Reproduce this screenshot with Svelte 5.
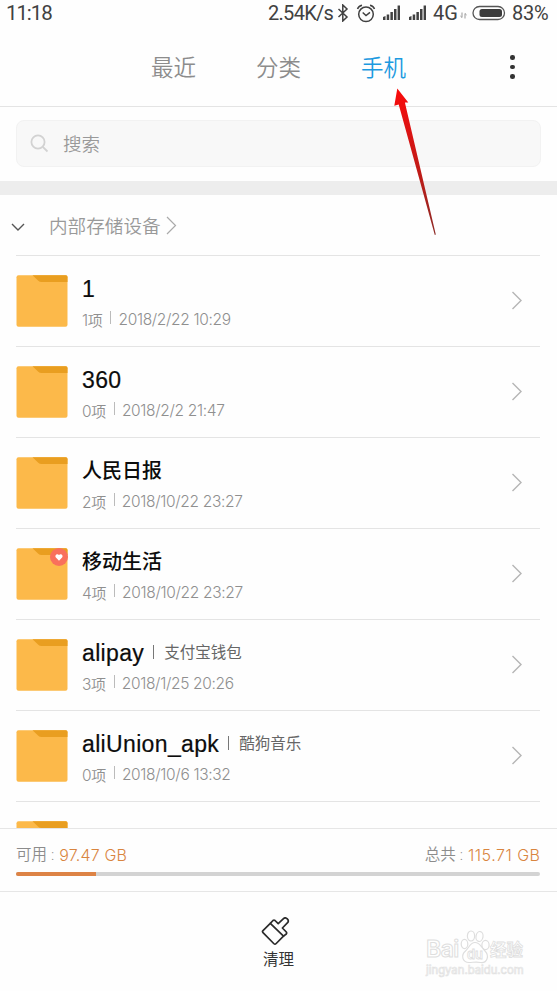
<script>
  const tabs = [
    { label: '最近', active: false },
    { label: '分类', active: false },
    { label: '手机', active: true }
  ];
  const folders = [
    { name: '1', count: '1', date: '2018/2/22 10:29' },
    { name: '360', count: '0', date: '2018/2/2 21:47' },
    { name: '人民日报', cjk: true, count: '2', date: '2018/10/22 23:27' },
    { name: '移动生活', cjk: true, count: '4', date: '2018/10/22 23:27', liked: true },
    { name: 'alipay', note: '支付宝钱包', count: '3', date: '2018/1/25 20:26' },
    { name: 'aliUnion_apk', note: '酷狗音乐', count: '0', date: '2018/10/6 13:32' }
  ];
  const available = 97.47;
  const total = 115.71;
  const used = ((total - available) / total) * 96.5;
</script>

{#snippet folderIcon()}
  <svg class="folder" width="52" height="52" viewBox="0 0 52 52">
    <rect x=".5" y=".3" width="51" height="51.4" rx="2" fill="#fcb94a" />
    <path d="M16.5.3H50a1.5 1.5 0 0 1 1.5 1.5V7H25.5q-2 0-3.2-1.3Z" fill="#e99e20" />
  </svg>
{/snippet}

{#snippet signal()}
  <svg width="18" height="16" viewBox="0 0 18 16" fill="#414141">
    <path d="M0 15v-3l2.500-1v4zM3.700 15V9.500h2.500V15zM7.400 15V7h2.500v8zM11 15V4h2.500v11zM14.600 15V0.500h2.400V15z" />
  </svg>
{/snippet}

<div class="screen">
  <div class="status">
    <span class="time">11:18</span>
    <span class="speed">2.54K/s</span>
    <svg class="bt" width="12" height="18" viewBox="0 0 12 18" fill="none" stroke="#414141" stroke-width="1.500">
      <path d="M1.500 5l8.500 8-4.200 4V1L10 5l-8.500 8" />
    </svg>
    <svg class="alarm" width="20" height="19" viewBox="0 0 20 19" fill="none" stroke="#414141" stroke-width="1.500">
      <circle cx="10" cy="10.300" r="7.300" />
      <path d="M1.500 5Q2.500 2 6 1.200M18.500 5Q17.500 2 14 1.200M6.700 8.500l3.300 3 4-3.200" />
    </svg>
    <span class="sig one">{@render signal()}</span>
    <span class="sig">{@render signal()}</span>
    <span class="net">4G</span>
    <svg class="updown" width="7" height="7" viewBox="0 0 7 7" fill="none" stroke="#999" stroke-width="1">
      <path d="M2 .5v5L.4 4M5 6.500v-5L6.600 3" />
    </svg>
    <svg class="battery" width="34" height="16" viewBox="0 0 34 16">
      <rect x="1" y="1.500" width="31.500" height="13" rx="6.500" fill="none" stroke="#555" stroke-width="1.300" />
      <rect x="7.500" y="4" width="22.500" height="8" rx="2.500" fill="#3b3b3b" />
    </svg>
    <span class="pct">83%</span>
  </div>

  <header>
    <nav>
      {#each tabs as tab}
        <span class:active={tab.active}>{tab.label}</span>
      {/each}
    </nav>
    <div class="more"><i></i><i></i><i></i></div>
  </header>

  <div class="searchwrap">
    <div class="search">
      <svg width="19" height="19" viewBox="0 0 19 19" fill="none" stroke="#d2d2d2" stroke-width="1.800">
        <circle cx="8" cy="8" r="6.600" />
        <path d="M12.800 12.800l4.700 4.700" />
      </svg>
      <span>搜索</span>
    </div>
  </div>
  <div class="band"></div>

  <div class="section">
    <svg width="14" height="9" viewBox="0 0 14 9" fill="none" stroke="#555" stroke-width="1.400">
      <path d="M1 1l6 6L13 1" />
    </svg>
    <span>内部存储设备</span>
    <svg class="crumb" width="11" height="19" viewBox="0 0 11 19" fill="none" stroke="#aaa" stroke-width="1.200">
      <path d="M1 1l8.500 8.500L1 18" />
    </svg>
  </div>

  <main>
    {#each folders as f}
      <div class="row">
        <div class="iconbox">
          {@render folderIcon()}
          {#if f.liked}
            <svg class="badge" width="18" height="18" viewBox="0 0 18 18">
              <circle cx="9" cy="9" r="9" fill="#f9705c" />
              <path d="M9 12.700L5.900 9.400C4.300 7.500 7.200 4.700 9 7c1.800-2.300 4.700.5 3.100 2.400z" fill="#fff" />
            </svg>
          {/if}
        </div>
        <div class="info">
          <div class="title">
            <span class={['name', f.cjk && 'cjk']}>{f.name}</span>
            {#if f.note}<i></i><span class="note">{f.note}</span>{/if}
          </div>
          <div class="sub">
            <span>{f.count}<b>项</b></span><i></i><span>{f.date}</span>
          </div>
        </div>
        <svg class="chev" width="12" height="19" viewBox="0 0 12 19" fill="none" stroke="#b5b5b5" stroke-width="1.400">
          <path d="M1.500 1l8.500 8.500L1.500 18" />
        </svg>
      </div>
    {/each}
    <div class="row">
      <div class="iconbox">{@render folderIcon()}</div>
    </div>
  </main>

  <div class="storage">
    <div class="labels">
      <span class="lab">可用<em>:</em></span><span class="val">{available} GB</span>
      <span class="lab right">总共<em>:</em></span><span class="val">{total} GB</span>
    </div>
    <div class="bar"><div style="width: {used}%"></div></div>
  </div>

  <footer>
    <svg width="30" height="30" viewBox="0 0 30 30" fill="none" stroke="#2b2b2b" stroke-width="1.700" stroke-linejoin="round">
      <path d="M9.300 6.300L2 13.600Q1 14.600 2 15.600L12.700 26.500Q14 27.700 15.200 26.500L22.500 19.200Z" />
      <path d="M9.300 6.300L12 3.500Q13 2.700 14 3.500L17.200 6.700L22.500 1.600C25-.500 28.700 3 26.600 5.700L21.400 11L25.300 15Q26 16 25.300 17L22.500 19.200" />
    </svg>
    <span>清理</span>
  </footer>

  <div class="mark">
    <div class="brand">
      <span class="bai">Bai</span>
      <svg width="30" height="34" viewBox="0 0 30 34" fill="#fff" stroke="#dedede" stroke-width="1.200">
        <ellipse cx="4.500" cy="14" rx="3.300" ry="4.600" />
        <ellipse cx="11" cy="6" rx="3.600" ry="5" />
        <ellipse cx="19.500" cy="6.500" rx="3.500" ry="5" transform="rotate(10 19.500 6.500)" />
        <ellipse cx="25.500" cy="15" rx="3.600" ry="4.600" />
        <path d="M15 12.500c-5 0-6 5.500-9.500 8.500-5 4.500-3 11.500 3.500 11.500 4 0 7-1 11.500 0 7 1 9-7 4.500-11.500-4-4-5-8.500-10-8.500z" />
        <text x="15" y="29" text-anchor="middle" font-family="Inter, sans-serif" font-size="13" font-weight="600" stroke-width=".8">du</text>
      </svg>
      <span class="exp">经验</span>
    </div>
    <div class="url">jingyan.baidu.com</div>
  </div>

  <svg class="arrow" width="44" height="150" viewBox="0 0 44 150">
    <defs>
      <linearGradient id="red" x1="0" y1="0" x2="0" y2="1">
        <stop offset="0" stop-color="#fa0a0a" />
        <stop offset=".25" stop-color="#e01212" />
        <stop offset=".6" stop-color="#bd1c18" />
        <stop offset="1" stop-color="#8c2a26" />
      </linearGradient>
    </defs>
    <path d="M5.300 2.500L2.300 19.800L6.700 18.600L42.800 149L43.800 148.600L12.900 16.500L16.300 16.500Z" fill="url(#red)" />
  </svg>
</div>

<style>
  :global(body) { margin: 0; background: #fff; }
  .screen {
    position: relative;
    width: 557px;
    height: 991px;
    overflow: hidden;
    display: flex;
    flex-direction: column;
    background: #fefefe;
    font-family: Roboto, 'Noto Sans CJK SC', sans-serif;
    color: #999;
  }
  svg { display: block; flex: none; }
  i, em, b { font-style: normal; font-weight: inherit; }
  .status {
    height: 26px;
    flex: none;
    display: flex;
    align-items: center;
    color: #414141;
    font-size: 20px;
    line-height: 26px;
    white-space: nowrap;
  }
  .time { width: 262px; padding-left: 6px; letter-spacing: -1.100px; font-size: 20.500px; }
  .speed { width: 69px; letter-spacing: -.7px; }
  .alarm { margin-left: 7px; }
  .sig { margin-left: 8px; }
  .sig.one { margin-left: 7px; }
  .net { margin-left: 6px; width: 27px; }
  .updown { margin-top: 5px; }
  .battery { margin-left: 5px; }
  .pct { margin-left: 6px; letter-spacing: -.2px; }

  header {
    height: 80px;
    flex: none;
    display: flex;
    border-bottom: 1px solid #e4e4e4;
  }
  nav { display: flex; gap: 60px; padding-left: 151px; width: 354px; }
  nav span {
    font-family: 'Noto Sans CJK SC', sans-serif;
    font-size: 22.500px;
    line-height: 80px;
    color: #8c8c8c;
    font-weight: 350;
    white-space: nowrap;
  }
  nav .active { color: #1d9ae0; }
  .more { display: flex; flex-direction: column; gap: 5px; padding-top: 29px; margin-left: 5px; }
  .more i { width: 4.500px; height: 4.500px; border-radius: 50%; background: #333; }

  .searchwrap { padding: 13px 16px 14px; height: 47px; flex: none; }
  .search {
    height: 45px;
    border: 1px solid #f2f2f2;
    border-radius: 8px;
    background: #f8f8f8;
    display: flex;
    align-items: center;
    padding-left: 13px;
    gap: 14px;
    font-size: 18.500px;
    font-weight: 350;
    color: #999;
  }
  .search span { margin-top: -2px; }
  .band { height: 14px; background: #ededed; flex: none; }
  .section {
    height: 60px;
    flex: none;
    margin: 0 17px 0 16px;
    border-bottom: 1px solid #e4e4e4;
    display: flex;
    align-items: center;
    font-size: 18.600px;
    font-weight: 350;
    color: #999;
  }
  .section span { margin-top: -2px; }
  .section svg:first-child { margin: 4px 24px 0 -5px; }
  .crumb { margin-left: 5px; }

  main { height: 572px; flex: none; overflow: hidden; padding: 0 17px 0 16px; }
  .row { height: 90px; border-bottom: 1px solid #e4e4e4; display: flex; }
  .iconbox { position: relative; padding-top: 19px; width: 66px; flex: none; }
  .badge { position: absolute; left: 34px; top: 19px; }
  .info { flex: 1; }
  .title { display: flex; align-items: center; height: 30px; margin-top: 18px; }
  .name { font-family: 'Liberation Sans', sans-serif; font-size: 23px; letter-spacing: .35px; color: #0c0c0c; -webkit-text-stroke: .2px #0c0c0c; }
  .name.cjk { font-family: 'Noto Sans CJK SC', sans-serif; font-size: 20px; letter-spacing: 0; font-weight: 500; line-height: 28px; margin-top: -2px; -webkit-text-stroke: 0; }
  .title i { width: 1px; height: 14px; background: #777; margin: -3px 10px 0 9px; }
  .note { font-family: 'Noto Sans CJK SC', sans-serif; font-size: 15.500px; color: #666; margin-top: -5px; }
  .sub {
    display: flex;
    align-items: center;
    height: 24px;
    margin-top: 3px;
    font-family: Inter, 'Noto Sans CJK SC', sans-serif;
    font-size: 15.500px;
    font-weight: 300;
    letter-spacing: -.33px;
    color: #8f8f8f;
  }
  .sub b { font-size: 15px; font-weight: 350; }
  .sub i { width: 1px; height: 13px; background: #bbb; margin: -3px 7px 0 8px; }
  .chev { margin: 35px 17px 0 0; }

  .storage { height: 62px; border-top: 1px solid #e6e6e6; border-bottom: 1px solid #e6e6e6; padding: 0 17px 0 16px; flex: none; }
  .labels { display: flex; height: 43px; padding-top: 5px; line-height: 43px; box-sizing: border-box; }
  .lab { font-size: 15.500px; font-weight: 350; color: #8c8c8c; }
  .lab em { margin: 0 5px 0 4px; }
  .right { margin-left: auto; }
  .val { font-family: Inter, sans-serif; font-size: 16px; letter-spacing: .15px; color: #d9853f; font-weight: 300; }
  .right + .val { letter-spacing: .5px; margin-right: -.5px; }
  .bar { height: 4px; border-radius: 2px; background: #d3d3d3; overflow: hidden; }
  .bar div { height: 100%; background: #dd8345; }

  footer { display: flex; flex-direction: column; align-items: center; padding-top: 25px; font-family: 'Noto Sans CJK SC', sans-serif; font-size: 15.500px; color: #333; line-height: 24px; }
  footer svg { margin: 0 5px 0 0; }
  footer span { margin-top: -1px; }

  .mark { position: absolute; left: 426px; top: 930px; font-family: Inter, sans-serif; color: #fff; }
  .brand { display: flex; align-items: flex-end; height: 34px; }
  .bai { font-size: 23px; font-weight: 600; line-height: 30px; width: 34px; letter-spacing: -.5px; -webkit-text-stroke: 1px #dedede; }
  .exp { font-family: 'Noto Sans CJK SC', sans-serif; font-weight: 700; font-size: 16.500px; line-height: 30px; -webkit-text-stroke: .8px #dedede; }
  .url { font-size: 11.300px; line-height: 13px; color: #fff; -webkit-text-stroke: .7px #e2e2e2; }
  .arrow { position: absolute; left: 392px; top: 86px; }
</style>
